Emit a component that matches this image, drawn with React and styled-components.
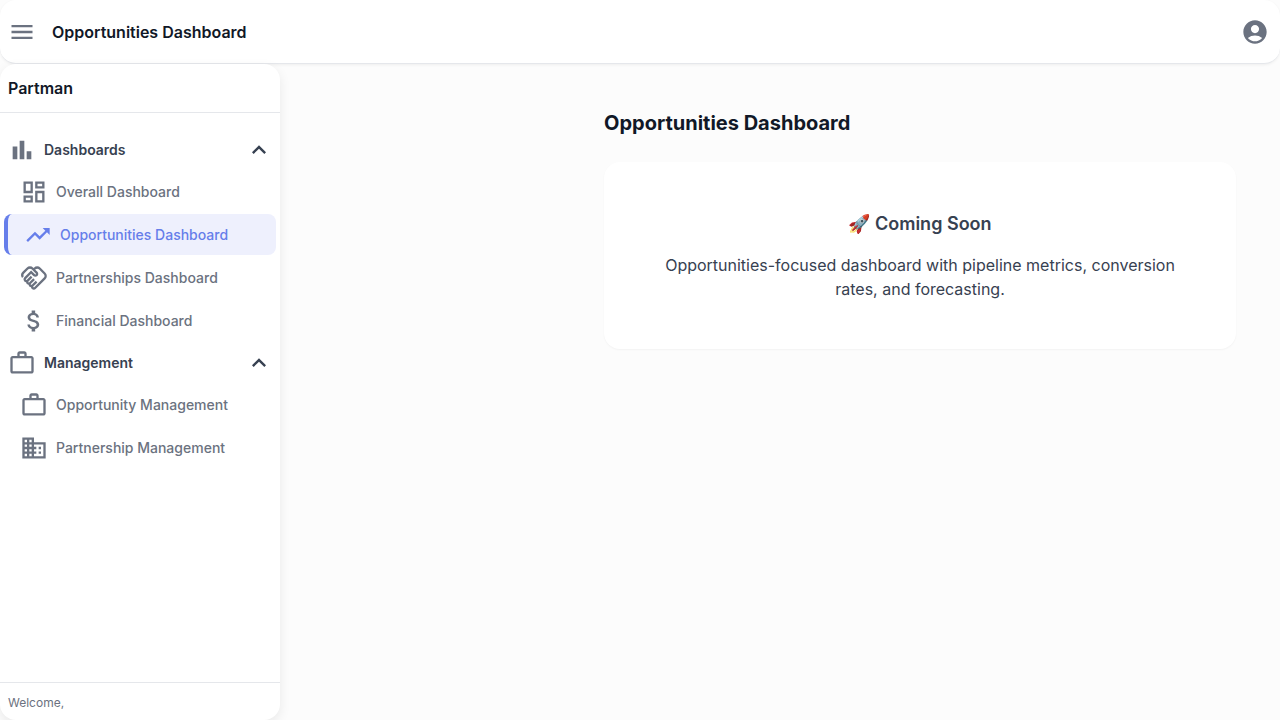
import React, { useState } from "react";
import styled, { createGlobalStyle, css } from "styled-components";
import {
  MdMenu,
  MdAccountCircle,
  MdBarChart,
  MdOutlineDashboard,
  MdTrendingUp,
  MdOutlineHandshake,
  MdAttachMoney,
  MdWorkOutline,
  MdBusiness,
  MdExpandLess,
  MdExpandMore,
} from "react-icons/md";

const GlobalStyle = createGlobalStyle`
  *, *::before, *::after { box-sizing: border-box; }
  body {
    margin: 0;
    background: #fcfcfc;
    color: #374151;
    font-family: Inter, "Liberation Sans", sans-serif;
    font-size: 16px;
    line-height: 24px;
  }
  h1, h2, h3, p, ul { margin: 0; padding: 0; }
  ul { list-style: none; }
`;

const Page = styled.div`
  display: flex;
  flex-direction: column;
  min-height: 100vh;
`;

const TopBar = styled.header`
  display: flex;
  align-items: center;
  gap: 16px;
  height: 64px;
  padding: 0 11px 0 8px;
  background: #fff;
  border-bottom: 1px solid #e5e7eb;
  border-radius: 16px;
  box-shadow: 0 1px 3px rgba(0, 0, 0, 0.06);
`;

const IconButton = styled.button`
  display: flex;
  padding: 0;
  border: 0;
  background: none;
  color: #6b7280;
  cursor: pointer;
  font-size: 28px;
`;

const BarTitle = styled.h1`
  flex: 1;
  color: #111827;
  font-size: 16px;
  font-weight: 600;
`;

const Body = styled.div`
  display: flex;
  flex: 1;
`;

const Sidebar = styled.aside`
  display: flex;
  flex-direction: column;
  flex: none;
  width: 280px;
  background: #fff;
  border-radius: 16px;
  box-shadow: 0 4px 12px rgba(0, 0, 0, 0.08);
`;

const Brand = styled.div`
  padding: 12px 8px;
  border-bottom: 1px solid #e5e7eb;
  color: #111827;
  font-weight: 600;
`;

const Nav = styled.nav`
  flex: 1;
  padding: 16px 0;
`;

const rowStyles = css`
  display: flex;
  align-items: center;
  gap: 8px;
  height: 41px;
  font-size: 14px;
  line-height: 20px;

  svg {
    flex: none;
    font-size: 28px;
  }
`;

const GroupButton = styled.button`
  ${rowStyles}
  width: 100%;
  padding: 0 7px 0 8px;
  border: 0;
  background: none;
  color: #374151;
  font-family: inherit;
  font-weight: 600;
  text-align: left;
  cursor: pointer;

  svg:first-child {
    color: #6b7280;
  }
`;

const GroupLabel = styled.span`
  flex: 1;
`;

const NavLink = styled.a`
  ${rowStyles}
  margin: 1px 4px;
  padding: 0 16px;
  border-radius: 8px;
  color: ${(p) => (p.$active ? "#667eea" : "#6b7280")};
  background: ${(p) => (p.$active ? "#eef0fd" : "transparent")};
  border-left: ${(p) => (p.$active ? "4px solid #667eea" : "0")};
  font-weight: 500;
  text-decoration: none;
`;

const NavItem = styled.li`
  display: flow-root;
`;

const Welcome = styled.div`
  padding: 11px 8px 8px;
  border-top: 1px solid #e5e7eb;
  color: #6b7280;
  font-size: 12px;
  line-height: 18px;
`;

const Main = styled.main`
  flex: 1;
  margin-left: 280px;
  padding: 44px;
`;

const PageTitle = styled.h2`
  margin-bottom: 24px;
  color: #111827;
  font-size: 20px;
  font-weight: 700;
  line-height: 30px;
`;

const Card = styled.section`
  padding: 48px;
  background: #fff;
  border-radius: 16px;
  box-shadow: 0 1px 2px rgba(0, 0, 0, 0.04);
  text-align: center;
`;

const CardTitle = styled.h3`
  margin-bottom: 16px;
  font-size: 18px;
  font-weight: 600;
  line-height: 27px;
`;

const groups = [
  {
    label: "Dashboards",
    Icon: MdBarChart,
    items: [
      { label: "Overall Dashboard", Icon: MdOutlineDashboard },
      { label: "Opportunities Dashboard", Icon: MdTrendingUp, active: true },
      { label: "Partnerships Dashboard", Icon: MdOutlineHandshake },
      { label: "Financial Dashboard", Icon: MdAttachMoney },
    ],
  },
  {
    label: "Management",
    Icon: MdWorkOutline,
    items: [
      { label: "Opportunity Management", Icon: MdWorkOutline },
      { label: "Partnership Management", Icon: MdBusiness },
    ],
  },
];

function NavGroup({ label, Icon, items }) {
  const [open, setOpen] = useState(true);
  return (
    <li>
      <GroupButton type="button" aria-expanded={open} onClick={() => setOpen(!open)}>
        <Icon />
        <GroupLabel>{label}</GroupLabel>
        {open ? <MdExpandLess /> : <MdExpandMore />}
      </GroupButton>
      {open && (
        <ul>
          {items.map((item) => (
            <NavItem key={item.label}>
              <NavLink href="#" $active={item.active} aria-current={item.active ? "page" : undefined}>
                <item.Icon />
                {item.label}
              </NavLink>
            </NavItem>
          ))}
        </ul>
      )}
    </li>
  );
}

export default function App() {
  return (
    <Page>
      <GlobalStyle />
      <TopBar>
        <IconButton type="button" aria-label="Toggle menu">
          <MdMenu />
        </IconButton>
        <BarTitle>Opportunities Dashboard</BarTitle>
        <IconButton type="button" aria-label="Account">
          <MdAccountCircle />
        </IconButton>
      </TopBar>
      <Body>
        <Sidebar>
          <Brand>Partman</Brand>
          <Nav>
            <ul>
              {groups.map((group) => (
                <NavGroup key={group.label} {...group} />
              ))}
            </ul>
          </Nav>
          <Welcome>Welcome,</Welcome>
        </Sidebar>
        <Main>
          <PageTitle>Opportunities Dashboard</PageTitle>
          <Card>
            <CardTitle>🚀 Coming Soon</CardTitle>
            <p>
              Opportunities-focused dashboard with pipeline metrics, conversion rates, and
              forecasting.
            </p>
          </Card>
        </Main>
      </Body>
    </Page>
  );
}
